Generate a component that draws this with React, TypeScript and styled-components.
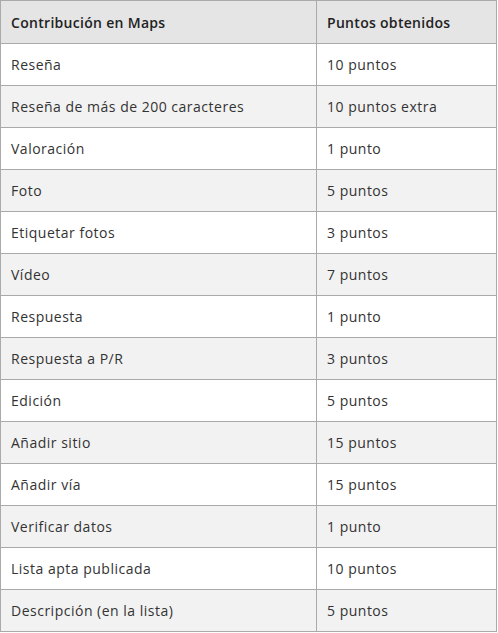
import React from "react";
import styled, { createGlobalStyle } from "styled-components";

const GlobalStyle = createGlobalStyle`
  html, body {
    margin: 0;
    padding: 0;
    background: #ffffff;
  }
  body {
    font-family: "Open Sans", "Noto Sans", sans-serif;
  }
`;

const Table = styled.table`
  border-collapse: collapse;
  width: 497px;
  table-layout: fixed;
  font-size: 14px;
  color: #333333;
`;

const HeadCell = styled.th`
  background: #e5e5e5;
  border: 1px solid #aaaaaa;
  height: 42px;
  padding: 0 10px;
  text-align: left;
  font-weight: 600;
  letter-spacing: 0.3px;
  color: #222222;
`;

const Row = styled.tr<{ $shaded: boolean }>`
  background: ${(p) => (p.$shaded ? "#f2f2f2" : "#ffffff")};
`;

const Cell = styled.td`
  border: 1px solid #aaaaaa;
  height: 42px;
  padding: 0 10px;
  letter-spacing: 0.5px;
  box-sizing: border-box;
`;

const rows: [string, string][] = [
  ["Reseña", "10 puntos"],
  ["Reseña de más de 200 caracteres", "10 puntos extra"],
  ["Valoración", "1 punto"],
  ["Foto", "5 puntos"],
  ["Etiquetar fotos", "3 puntos"],
  ["Vídeo", "7 puntos"],
  ["Respuesta", "1 punto"],
  ["Respuesta a P/R", "3 puntos"],
  ["Edición", "5 puntos"],
  ["Añadir sitio", "15 puntos"],
  ["Añadir vía", "15 puntos"],
  ["Verificar datos", "1 punto"],
  ["Lista apta publicada", "10 puntos"],
  ["Descripción (en la lista)", "5 puntos"],
];

export default function App() {
  return (
    <>
      <GlobalStyle />
      <Table>
        <colgroup>
          <col style={{ width: 316 }} />
          <col />
        </colgroup>
        <thead>
          <tr>
            <HeadCell>Contribución en Maps</HeadCell>
            <HeadCell>Puntos obtenidos</HeadCell>
          </tr>
        </thead>
        <tbody>
          {rows.map(([what, points], i) => (
            <Row key={what} $shaded={i % 2 === 1}>
              <Cell>{what}</Cell>
              <Cell>{points}</Cell>
            </Row>
          ))}
        </tbody>
      </Table>
    </>
  );
}
